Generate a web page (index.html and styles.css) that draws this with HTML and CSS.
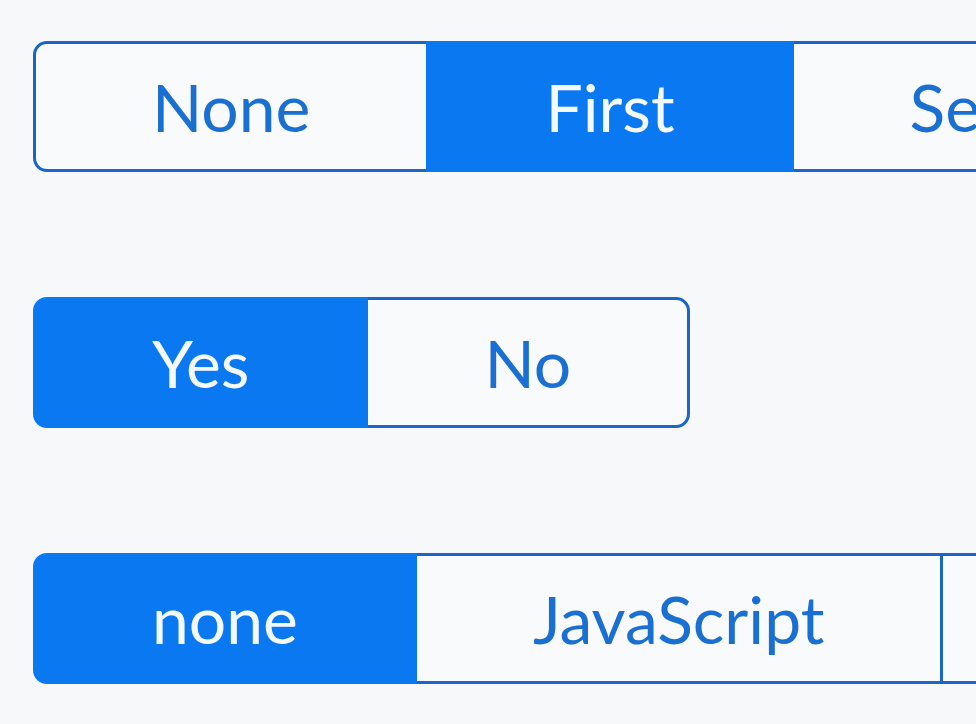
FILE: index.html
```html
<!DOCTYPE html>
<html lang="en">
<head>
<meta charset="utf-8">
<title>Segmented controls</title>
<link rel="stylesheet" href="styles.css">
</head>
<body>
<main class="stack">
  <div class="seg">
    <div class="opt">None</div>
    <div class="opt on">First</div>
    <div class="opt">Second</div>
  </div>
  <div class="seg">
    <div class="opt on">Yes</div>
    <div class="opt">No</div>
  </div>
  <div class="seg">
    <div class="opt on">none</div>
    <div class="opt">JavaScript</div>
    <div class="opt">TypeScript</div>
  </div>
</main>
</body>
</html>
```
FILE: styles.css
```css
html, body {
  margin: 0;
  padding: 0;
  background: #f7f8f9;
  overflow: hidden;
}
body {
  width: 976px;
  height: 724px;
}
.stack {
  display: flex;
  flex-direction: column;
  align-items: flex-start;
  gap: 125px;
  padding: 41px 0 0 33px;
}
.seg {
  display: flex;
  flex-wrap: nowrap;
  white-space: nowrap;
}
.opt {
  flex: none;
  height: 131px;
  box-sizing: border-box;
  padding: 0 116px;
  display: flex;
  align-items: center;
  border: 3px solid #1a66c8;
  margin-left: -3px;
  background: #f9fafb;
  color: #1a6fd2;
  font-family: Lato, "Open Sans", sans-serif;
  font-size: 66px;
  font-weight: 400;
  line-height: 1;
}
.opt:first-child {
  margin-left: 0;
  border-radius: 14px 0 0 14px;
}
.opt:last-child {
  border-radius: 0 14px 14px 0;
}
.opt.on {
  background: #0a78f0;
  border-color: #0a78f0;
  color: #f4f9ff;
  position: relative;
}
```
